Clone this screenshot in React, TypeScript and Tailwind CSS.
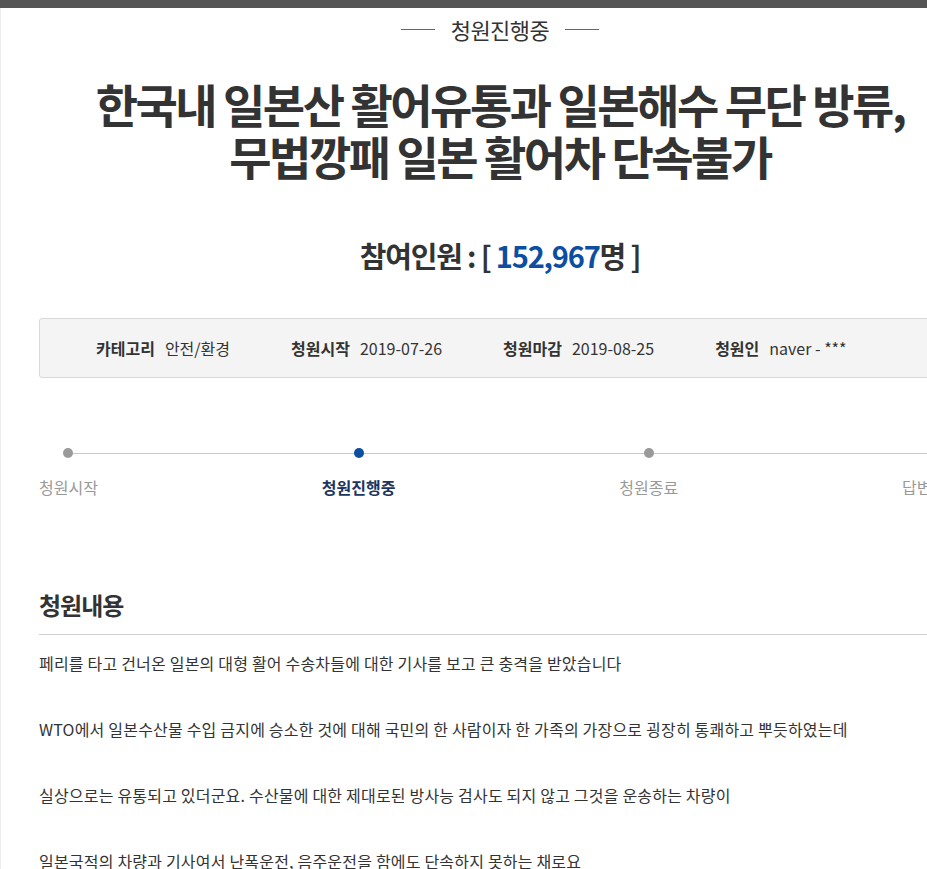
const steps = [
  { label: "청원시작", active: false },
  { label: "청원진행중", active: true },
  { label: "청원종료", active: false },
  { label: "답변대기", active: false },
];

const info = [
  { k: "카테고리", v: "안전/환경" },
  { k: "청원시작", v: "2019-07-26" },
  { k: "청원마감", v: "2019-08-25" },
  { k: "청원인", v: "naver - ***" },
];

const body = [
  "페리를 타고 건너온 일본의 대형 활어 수송차들에 대한 기사를 보고 큰 충격을 받았습니다",
  "WTO에서 일본수산물 수입 금지에 승소한 것에 대해 국민의 한 사람이자 한 가족의 가장으로 굉장히 통쾌하고 뿌듯하였는데",
  "실상으로는 유통되고 있더군요. 수산물에 대한 제대로된 방사능 검사도 되지 않고 그것을 운송하는 차량이",
  "일본국적의 차량과 기사여서 난폭운전, 음주운전을 함에도 단속하지 못하는 채로요",
];

export default function App() {
  return (
    <div className="min-h-screen w-full overflow-hidden bg-white font-['Noto_Sans_CJK_KR','Noto_Sans',sans-serif] text-[#333]">
      <div className="h-2 bg-[#555]" />
      <div className="border-l border-[#ececec]">
        <div className="ml-[38px] w-[922px]">
          <div className="flex items-center justify-center gap-[16px] pt-[6px]">
            <span className="h-px w-[34px] bg-[#666]" />
            <span className="text-[22px] leading-[30px] tracking-[-0.5px]">청원진행중</span>
            <span className="h-px w-[34px] bg-[#666]" />
          </div>

          <h1 className="mt-[33px] text-center text-[46px] font-bold leading-[52px] tracking-[-2.5px]">
            한국내 일본산 활어유통과 일본해수 무단 방류,
            <br />
            무법깡패 일본 활어차 단속불가
          </h1>

          <p className="mt-[54px] text-center text-[29px] font-bold leading-[40px] tracking-[-1.2px]">
            참여인원 : [ <span className="text-[#0b4ea2]">152,967</span>명 ]
          </p>

          <div className="mt-[43px] flex h-[60px] items-center gap-[61px] rounded-[3px] border border-[#d9d9d9] bg-[#f4f4f4] pl-[56px] text-[16px]">
            {info.map((it) => (
              <div key={it.k} className="flex items-center gap-[10px]">
                <span className="font-bold">{it.k}</span>
                <span>{it.v}</span>
              </div>
            ))}
          </div>

          <div className="relative mt-[70px] flex justify-between">
            <div className="absolute left-[30px] right-[30px] top-[4.5px] h-px bg-[#c8c8c8]" />
            {steps.map((s) => (
              <div key={s.label} className="relative flex flex-col items-center">
                <span className={`h-[10px] w-[10px] rounded-full ${s.active ? "bg-[#0b4ea2]" : "bg-[#9a9a9a]"}`} />
                <span
                  className={`mt-[17px] text-[16px] leading-[24px] ${
                    s.active ? "font-bold text-[#1d3660]" : "text-[#999]"
                  }`}
                >
                  {s.label}
                </span>
              </div>
            ))}
          </div>

          <h2 className="mt-[89px] border-b border-[#cfcfcf] pb-[12px] text-[24px] font-bold leading-[34px] tracking-[-1px]">
            청원내용
          </h2>

          <div className="mt-[12px] text-[16px] leading-[33px] tracking-[0.2px]">
            {body.map((line) => (
              <p key={line} className="mb-[33px]">
                {line}
              </p>
            ))}
          </div>
        </div>
      </div>
    </div>
  );
}
